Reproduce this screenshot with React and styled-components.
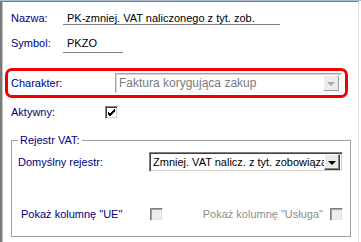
import React from 'react';
import styled, { createGlobalStyle } from 'styled-components';

const GlobalStyle = createGlobalStyle`
  html, body {
    margin: 0;
    padding: 0;
    background: #fff;
  }
  body {
    font-family: "Liberation Sans", Arial, sans-serif;
    font-size: 11px;
  }
`;

const Window = styled.div`
  width: 361px;
  height: 242px;
  box-sizing: border-box;
  border-top: 1px solid #a9bcd6;
  overflow: hidden;
  display: flex;
`;

const Pane = styled.div`
  width: 359px;
  height: 241px;
  box-sizing: border-box;
  border-top: 1px solid #7d7d7d;
  border-left: 2px solid #7a7a7a;
  border-right: 1px solid #dedede;
  box-shadow: inset 1px 0 #c4c4c4;
  padding-left: 9px;
  display: flex;
  flex-direction: column;
`;

const Row = styled.div`
  display: flex;
  align-items: ${(p) => p.$align || 'center'};
  margin-top: ${(p) => p.$top || 0}px;
  height: ${(p) => (p.$height ? `${p.$height}px` : 'auto')};
`;

const Label = styled.span`
  width: ${(p) => p.$width}px;
  flex: none;
  color: ${(p) => (p.$disabled ? '#8d8d8d' : '#00007f')};
  line-height: 11px;
  white-space: nowrap;
  margin-left: ${(p) => p.$indent || 0}px;
`;

const Field = styled.div`
  width: ${(p) => p.$width}px;
  box-sizing: border-box;
  padding: 0 0 ${(p) => p.$pad || 0}px 4px;
  border-bottom: 1px solid #808080;
  line-height: 11px;
  color: #000;
  white-space: nowrap;
`;

const Highlight = styled.div`
  margin-left: -6px;
  margin-top: 15px;
  width: 343px;
  height: 30px;
  box-sizing: border-box;
  border: 3px solid #f00000;
  border-radius: 7px;
  padding: 2px 3px 2px 3px;
  display: flex;
  align-items: center;
`;

const Combo = styled.div`
  width: ${(p) => p.$width}px;
  height: 20px;
  box-sizing: border-box;
  display: flex;
  align-items: center;
  background: #fff;
  border: 1px solid;
  border-color: ${(p) => (p.$disabled ? '#a0a0a0 #f4f4f4 #f4f4f4 #a0a0a0' : '#808080 #fff #fff #808080')};
  box-shadow: ${(p) => (p.$disabled ? 'inset 1px 1px #d8d8d8' : 'inset 1px 1px #404040, inset -1px -1px #d4d0c8')};
  padding: 2px;
  overflow: hidden;
`;

const ComboText = styled.span`
  flex: 1;
  min-width: 0;
  overflow: hidden;
  white-space: nowrap;
  font-size: ${(p) => (p.$disabled ? 12 : 11)}px;
  color: ${(p) => (p.$disabled ? '#7a7a7a' : '#000')};
  padding-left: 1px;
  line-height: 14px;
`;

const DropButton = styled.div`
  width: 16px;
  height: 16px;
  flex: none;
  box-sizing: border-box;
  display: flex;
  align-items: center;
  justify-content: center;
  background: ${(p) => (p.$disabled ? '#ececec' : '#ece9e4')};
  border: 1px solid;
  border-color: ${(p) => (p.$disabled ? '#fff #9a9a9a #9a9a9a #fff' : '#fff #404040 #404040 #fff')};
  box-shadow: ${(p) => (p.$disabled ? 'none' : 'inset -1px -1px #808080')};
`;

const Arrow = styled.span`
  width: 0;
  height: 0;
  border-left: 4px solid transparent;
  border-right: 4px solid transparent;
  border-top: 4px solid ${(p) => (p.$disabled ? '#a8a8a8' : '#000')};
  margin-top: 1px;
`;

const Check = styled.div`
  width: 13px;
  height: 13px;
  flex: none;
  box-sizing: border-box;
  border: 1px solid;
  border-color: #808080 #fff #fff #808080;
  box-shadow: ${(p) => (p.$disabled ? 'inset 1px 1px #a0a0a0, inset -1px -1px #e4e4e4' : 'inset 1px 1px #404040, inset -1px -1px #d4d0c8')};
  background: ${(p) => (p.$disabled ? '#ececec' : '#fff')};
  display: flex;
  align-items: center;
  justify-content: center;
`;

const Group = styled.fieldset`
  margin: 15px 0 0 0;
  padding: 0;
  width: 340px;
  height: 103px;
  box-sizing: border-box;
  border: 1px solid #a0a0a0;
  box-shadow: inset 1px 1px #fff;
  min-inline-size: auto;
`;

const Legend = styled.legend`
  color: #00007f;
  padding: 0 2px;
  margin-left: 6px;
  line-height: 13px;
`;

const RightPair = styled.div`
  display: flex;
  align-items: center;
  margin-left: auto;
  margin-right: 7px;
  gap: 7px;
`;

const Combobox = ({ width, text, disabled }) => (
  <Combo $width={width} $disabled={disabled}>
    <ComboText $disabled={disabled}>{text}</ComboText>
    <DropButton $disabled={disabled}>
      <Arrow $disabled={disabled} />
    </DropButton>
  </Combo>
);

const Checkbox = ({ checked, disabled }) => (
  <Check $disabled={disabled}>
    {checked && (
      <svg width="9" height="9" viewBox="0 0 9 9">
        <path d="M1 4 L3 6 L8 1 M1 5 L3 7 L8 2 M1 6 L3 8 L8 3" stroke="#000" strokeWidth="1" fill="none" />
      </svg>
    )}
  </Check>
);

export default function App() {
  return (
    <>
      <GlobalStyle />
      <Window>
        <Pane>
          <Row $align="baseline" $top={11}>
            <Label $width={52}>Nazwa:</Label>
            <Field $width={217}>PK-zmniej. VAT naliczonego z tyt. zob.</Field>
          </Row>
          <Row $align="baseline" $top={13}>
            <Label $width={52}>Symbol:</Label>
            <Field $width={60} $pad={3}>PKZO</Field>
          </Row>
          <Highlight>
            <Label $width={104}>Charakter:</Label>
            <Combobox width={227} text="Faktura korygująca zakup" disabled />
          </Highlight>
          <Row $top={8} $height={13}>
            <Label $width={94}>Aktywny:</Label>
            <Checkbox checked />
          </Row>
          <Group>
            <Legend>Rejestr VAT:</Legend>
            <Row $top={5} $height={20}>
              <Label $width={131} $indent={6}>Domyślny rejestr:</Label>
              <Combobox width={194} text="Zmniej. VAT nalicz. z tyt. zobowiązań" />
            </Row>
            <Row $top={36} $height={13}>
              <Label $width={129} $indent={9}>Pokaż kolumnę "UE"</Label>
              <Checkbox disabled />
              <RightPair>
                <Label $disabled>Pokaż kolumnę "Usługa"</Label>
                <Checkbox disabled />
              </RightPair>
            </Row>
          </Group>
        </Pane>
      </Window>
    </>
  );
}
